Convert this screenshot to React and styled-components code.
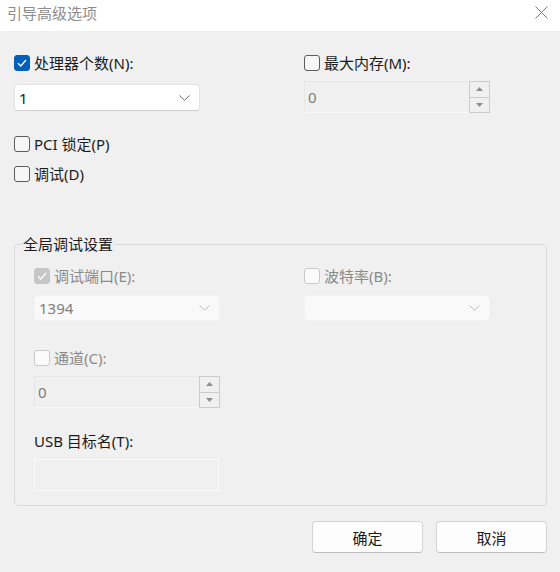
import styled, { createGlobalStyle } from 'styled-components';

const GlobalStyle = createGlobalStyle`
  html, body {
    margin: 0;
    padding: 0;
    background: #f0f0f0;
  }
  body {
    font-family: 'Noto Sans', 'Noto Sans CJK SC', sans-serif;
  }
`;

function CheckIcon() {
  return (
    <svg width="10" height="8" viewBox="0 0 10 8">
      <path d="M1 4.2 L3.8 7 L9 1" fill="none" stroke="#fff" strokeWidth="1.3" />
    </svg>
  );
}

function Chevron({ disabled }) {
  return (
    <svg width="11" height="6" viewBox="0 0 11 6">
      <path
        d="M0.5 0.5 L5.5 5.2 L10.5 0.5"
        fill="none"
        stroke={disabled ? '#bcbcbc' : '#6a6a6a'}
        strokeWidth="1"
      />
    </svg>
  );
}

function CheckBox({ checked, disabled, label }) {
  return (
    <CheckRow>
      <Box $checked={checked} $disabled={disabled}>
        {checked && <CheckIcon />}
      </Box>
      <Label $disabled={disabled}>{label}</Label>
    </CheckRow>
  );
}

function Select({ value, disabled }) {
  return (
    <SelectBox $disabled={disabled}>
      <FieldText $disabled={disabled}>{value}</FieldText>
      <Chevron disabled={disabled} />
    </SelectBox>
  );
}

function Spinner({ value }) {
  return (
    <SpinBox>
      <SpinInput>
        <FieldText $disabled>{value}</FieldText>
      </SpinInput>
      <SpinButtons>
        <SpinButton>
          <svg width="7" height="4" viewBox="0 0 7 4">
            <path d="M0 4 L3.5 0 L7 4 Z" fill="#8d8d8d" />
          </svg>
        </SpinButton>
        <SpinButton>
          <svg width="7" height="4" viewBox="0 0 7 4">
            <path d="M0 0 L3.5 4 L7 0 Z" fill="#8d8d8d" />
          </svg>
        </SpinButton>
      </SpinButtons>
    </SpinBox>
  );
}

export default function App() {
  return (
    <Window>
      <GlobalStyle />
      <TitleBar>
        <Title>引导高级选项</Title>
        <CloseButton>
          <svg width="13" height="13" viewBox="0 0 13 13">
            <path d="M0.5 0.5 L12.5 12.5 M12.5 0.5 L0.5 12.5" stroke="#7a7a7a" strokeWidth="1" />
          </svg>
        </CloseButton>
      </TitleBar>

      <Body>
        <TopGrid>
          <Column>
            <CheckBox checked label="处理器个数(N):" />
            <Select value="1" />
            <Spaced $top={23}>
              <CheckBox label="PCI 锁定(P)" />
            </Spaced>
            <Spaced $top={10}>
              <CheckBox label="调试(D)" />
            </Spaced>
          </Column>
          <Column>
            <CheckBox label="最大内存(M):" />
            <Spaced $top={8}>
              <Spinner value="0" />
            </Spaced>
          </Column>
        </TopGrid>

        <Group>
          <GroupTitle>全局调试设置</GroupTitle>
          <GroupGrid>
            <Column>
              <CheckBox checked disabled label="调试端口(E):" />
              <Spaced $top={9}>
                <Select value="1394" disabled />
              </Spaced>
              <Spaced $top={27}>
                <CheckBox disabled label="通道(C):" />
              </Spaced>
              <Spaced $top={8}>
                <Spinner value="0" />
              </Spaced>
              <Spaced $top={22}>
                <Label>USB 目标名(T):</Label>
              </Spaced>
              <Spaced $top={7}>
                <TextBox />
              </Spaced>
            </Column>
            <Column>
              <CheckBox disabled label="波特率(B):" />
              <Spaced $top={9}>
                <Select value="" disabled />
              </Spaced>
            </Column>
          </GroupGrid>
        </Group>

        <Footer>
          <Button>确定</Button>
          <Button>取消</Button>
        </Footer>
      </Body>
    </Window>
  );
}

const Window = styled.div`
  width: 560px;
  height: 572px;
  display: flex;
  flex-direction: column;
  background: #f0f0f0;
  overflow: hidden;
`;

const TitleBar = styled.div`
  height: 31px;
  flex-shrink: 0;
  box-sizing: border-box;
  background: #fff;
  display: flex;
  align-items: flex-start;
  justify-content: space-between;
  padding: 3px 12px 0 7px;
`;

const Title = styled.span`
  color: #8c8c8c;
  font-size: 15px;
  line-height: 21px;
`;

const CloseButton = styled.div`
  display: flex;
  margin-top: 3px;
`;

const Body = styled.div`
  flex: 1;
  display: flex;
  flex-direction: column;
  padding: 22px 13px 18px 14px;
`;

const TopGrid = styled.div`
  display: grid;
  grid-template-columns: 290px 186px;
`;

const Column = styled.div`
  display: flex;
  flex-direction: column;
  align-items: flex-start;
`;

const Spaced = styled.div`
  margin-top: ${(p) => p.$top}px;
`;

const CheckRow = styled.div`
  height: 20px;
  display: flex;
  align-items: center;
  gap: 4px;
`;

const Box = styled.div`
  width: 16px;
  height: 16px;
  box-sizing: border-box;
  border-radius: 3px;
  display: flex;
  align-items: center;
  justify-content: center;
  border: 1px solid
    ${(p) => (p.$checked ? (p.$disabled ? '#c6c6c6' : '#005fb8') : p.$disabled ? '#c9c9c9' : '#5c5c5c')};
  background: ${(p) =>
    p.$checked ? (p.$disabled ? '#c6c6c6' : '#005fb8') : p.$disabled ? '#fbfbfb' : '#f7f7f7'};
`;

const Label = styled.span`
  font-size: 15px;
  line-height: 20px;
  color: ${(p) => (p.$disabled ? '#8a8a8a' : '#1b1b1b')};
  white-space: nowrap;
`;

const SelectBox = styled.div`
  width: 186px;
  height: ${(p) => (p.$disabled ? 26 : 27)}px;
  box-sizing: border-box;
  margin-top: ${(p) => (p.$disabled ? 0 : 11)}px;
  display: flex;
  align-items: center;
  justify-content: space-between;
  padding: 0 9px 0 4px;
  border-radius: 4px;
  border: 1px solid ${(p) => (p.$disabled ? '#f3f3f3' : '#e3e3e3')};
  border-bottom-color: ${(p) => (p.$disabled ? '#f3f3f3' : '#cfcfcf')};
  background: ${(p) => (p.$disabled ? '#f9f9f9' : '#ffffff')};
`;

const FieldText = styled.span`
  font-size: 15px;
  line-height: 20px;
  color: ${(p) => (p.$disabled ? '#7d7d7d' : '#1b1b1b')};
`;

const SpinBox = styled.div`
  width: 186px;
  height: 32px;
  display: flex;
`;

const SpinInput = styled.div`
  flex: 1;
  box-sizing: border-box;
  display: flex;
  align-items: center;
  padding: 0 3px;
  border: 1px solid #e6e6e6;
  border-right: none;
  border-bottom-color: #fafafa;
  background: #f0f0f0;
`;

const SpinButtons = styled.div`
  width: 21px;
  display: flex;
  flex-direction: column;
  border: 1px solid #cbcbcb;
  box-sizing: border-box;
  background: #f0f0f0;
`;

const SpinButton = styled.div`
  flex: 1;
  display: flex;
  align-items: center;
  justify-content: center;
  & + & {
    border-top: 1px solid #cbcbcb;
  }
`;

const TextBox = styled.div`
  width: 185px;
  height: 32px;
  box-sizing: border-box;
  border: 1px solid #fbfbfb;
  background: #f0f0f0;
`;

const Group = styled.div`
  margin-top: 60px;
  border: 1px solid #dadada;
  border-radius: 4px;
  display: flex;
  flex-direction: column;
`;

const GroupTitle = styled.span`
  align-self: flex-start;
  margin: -11px 0 0 7px;
  padding: 0 1px;
  background: #f0f0f0;
  font-size: 15px;
  line-height: 20px;
  color: #1b1b1b;
`;

const GroupGrid = styled.div`
  display: grid;
  grid-template-columns: 270px 186px;
  padding: 12px 0 14px 19px;
`;

const Footer = styled.div`
  margin-top: 15px;
  display: flex;
  justify-content: flex-end;
  gap: 13px;
`;

const Button = styled.button`
  width: 111px;
  height: 32px;
  box-sizing: border-box;
  border-radius: 4px;
  border: 1px solid #d4d4d4;
  border-bottom-color: #bdbdbd;
  background: #fdfdfd;
  font-family: 'Noto Sans', 'Noto Sans CJK SC', sans-serif;
  font-size: 15px;
  color: #1b1b1b;
  padding: 0;
`;
